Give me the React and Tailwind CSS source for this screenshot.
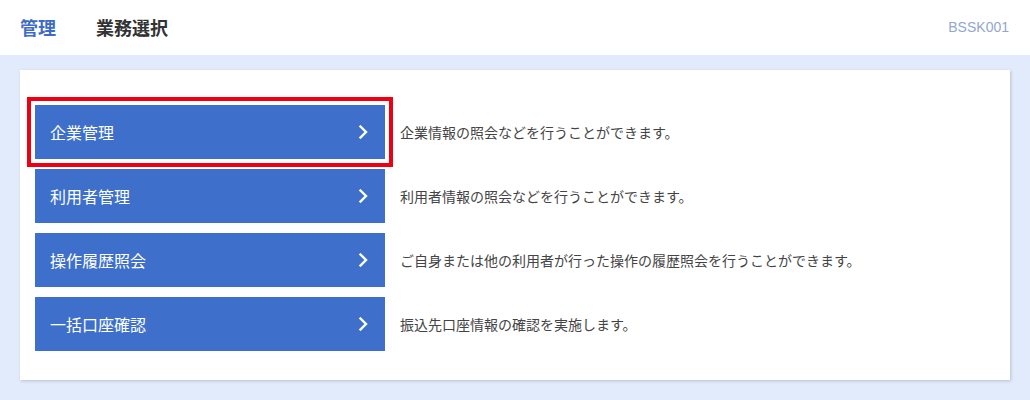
import React from 'react';

const menus = [
  { label: '企業管理', desc: '企業情報の照会などを行うことができます。', selected: true },
  { label: '利用者管理', desc: '利用者情報の照会などを行うことができます。' },
  { label: '操作履歴照会', desc: 'ご自身または他の利用者が行った操作の履歴照会を行うことができます。' },
  { label: '一括口座確認', desc: '振込先口座情報の確認を実施します。' },
];

function Chevron() {
  return (
    <svg width="10" height="14" viewBox="0 0 10 14" fill="none">
      <path d="M2.5 1.5L8 7L2.5 12.5" stroke="#fff" strokeWidth="2.4" strokeLinecap="square" />
    </svg>
  );
}

export default function App() {
  return (
    <div className="w-[1030px] h-[400px] bg-[#e2ebfb] font-['Noto_Sans_CJK_JP',sans-serif]">
      <header className="h-[55px] bg-white flex items-center px-5">
        <h1 className="text-[18px] font-bold text-[#3d6bc6] w-[76px]">管理</h1>
        <h2 className="text-[18px] font-bold text-[#333]">業務選択</h2>
        <span className="ml-auto text-[14px] text-[#93a6cf] font-['Liberation_Sans',sans-serif] mr-[1px]">BSSK001</span>
      </header>
      <main className="px-5 pt-[15px]">
        <div className="bg-white h-[310px] shadow-[1px_1px_3px_rgba(0,0,0,0.18)] pt-[35px] px-[15px] flex flex-col gap-[10px]">
          {menus.map((m) => (
            <div key={m.label} className="flex items-center">
              <button
                className={`w-[350px] h-[54px] bg-[#3d6fcb] text-white text-[16px] flex items-center justify-between pl-[15px] pr-[17px] ${
                  m.selected ? 'outline-[4px] outline-solid outline-[#ee0011] outline-offset-[4px]' : ''
                }`}
              >
                <span>{m.label}</span>
                <Chevron />
              </button>
              <p className="ml-[15px] text-[14px] text-[#444]">{m.desc}</p>
            </div>
          ))}
        </div>
      </main>
    </div>
  );
}
